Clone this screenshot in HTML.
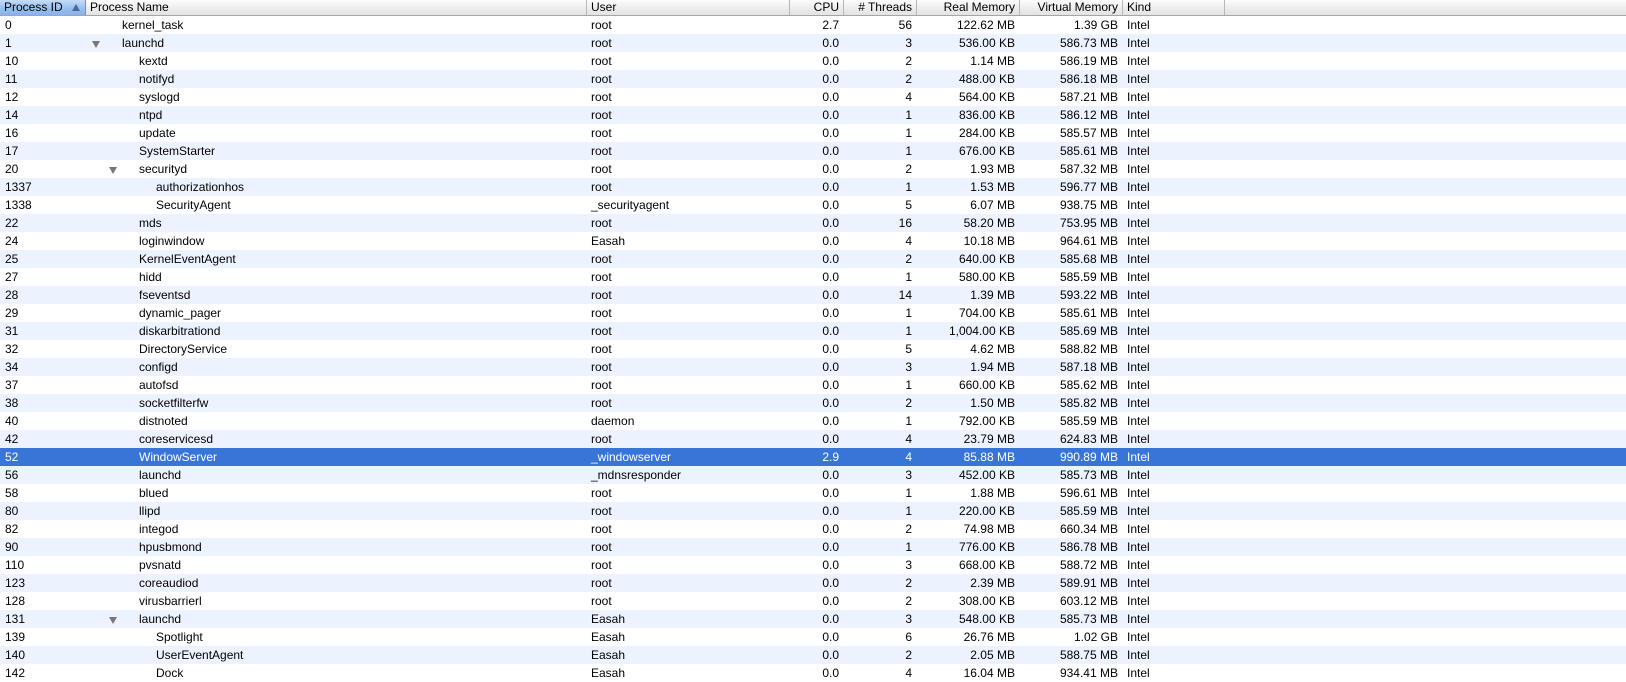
<!DOCTYPE html>
<html><head><meta charset="utf-8"><style>
body{margin:0;width:1626px;height:682px;overflow:hidden;background:#fff;font-family:"Liberation Sans",sans-serif;font-size:12px;color:#000;position:relative}
.hd{position:absolute;left:0;top:0;width:1626px;height:15px;background:linear-gradient(#fdfdfd,#eeeeee 50%,#e3e3e3);border-bottom:1px solid #a5a5a5}
.hd div{position:absolute;top:0;height:15px;line-height:15px;border-right:1px solid #b8b8b8;box-sizing:border-box;padding:0 4px;white-space:nowrap}
.hd .sel{background:linear-gradient(#c5dcf7,#9cc2ee 50%,#86b3e9);border-right:1px solid #6f95c4}
.r{position:absolute;left:0;width:1626px;height:18px;line-height:18px}
.r span{position:absolute;top:0;white-space:nowrap}
.a{left:5px}.u{left:591px}.k{left:1127px}
.c{right:787px}.t{right:714px}.m{right:611px}.v{right:508px}
.tri{position:absolute;top:7px;width:0;height:0;border-left:4px solid transparent;border-right:4px solid transparent;border-top:7px solid #777}
.r:nth-child(odd){background:#fff}.r:nth-child(even){background:#edf3fe}
.r.s{background:#3875d7 !important;color:#fff}
</style></head><body>
<div class="hd">
<div class="sel" style="left:0;width:86px">Process ID<span style="position:absolute;left:72px;top:4px;width:0;height:0;border-left:4px solid transparent;border-right:4px solid transparent;border-bottom:7px solid #4a6a95"></span></div>
<div style="left:86px;width:501px">Process Name</div>
<div style="left:587px;width:203px">User</div>
<div style="left:790px;width:54px;text-align:right">CPU</div>
<div style="left:844px;width:73px;text-align:right"># Threads</div>
<div style="left:917px;width:103px;text-align:right">Real Memory</div>
<div style="left:1020px;width:103px;text-align:right">Virtual Memory</div>
<div style="left:1123px;width:102px">Kind</div>
</div>
<div id="rows"></div>
<script>
var d=[
[0,"kernel_task",0,0,"root","2.7",56,"122.62 MB","1.39 GB"],
[1,"launchd",0,1,"root","0.0",3,"536.00 KB","586.73 MB"],
[10,"kextd",1,0,"root","0.0",2,"1.14 MB","586.19 MB"],
[11,"notifyd",1,0,"root","0.0",2,"488.00 KB","586.18 MB"],
[12,"syslogd",1,0,"root","0.0",4,"564.00 KB","587.21 MB"],
[14,"ntpd",1,0,"root","0.0",1,"836.00 KB","586.12 MB"],
[16,"update",1,0,"root","0.0",1,"284.00 KB","585.57 MB"],
[17,"SystemStarter",1,0,"root","0.0",1,"676.00 KB","585.61 MB"],
[20,"securityd",1,1,"root","0.0",2,"1.93 MB","587.32 MB"],
[1337,"authorizationhos",2,0,"root","0.0",1,"1.53 MB","596.77 MB"],
[1338,"SecurityAgent",2,0,"_securityagent","0.0",5,"6.07 MB","938.75 MB"],
[22,"mds",1,0,"root","0.0",16,"58.20 MB","753.95 MB"],
[24,"loginwindow",1,0,"Easah","0.0",4,"10.18 MB","964.61 MB"],
[25,"KernelEventAgent",1,0,"root","0.0",2,"640.00 KB","585.68 MB"],
[27,"hidd",1,0,"root","0.0",1,"580.00 KB","585.59 MB"],
[28,"fseventsd",1,0,"root","0.0",14,"1.39 MB","593.22 MB"],
[29,"dynamic_pager",1,0,"root","0.0",1,"704.00 KB","585.61 MB"],
[31,"diskarbitrationd",1,0,"root","0.0",1,"1,004.00 KB","585.69 MB"],
[32,"DirectoryService",1,0,"root","0.0",5,"4.62 MB","588.82 MB"],
[34,"configd",1,0,"root","0.0",3,"1.94 MB","587.18 MB"],
[37,"autofsd",1,0,"root","0.0",1,"660.00 KB","585.62 MB"],
[38,"socketfilterfw",1,0,"root","0.0",2,"1.50 MB","585.82 MB"],
[40,"distnoted",1,0,"daemon","0.0",1,"792.00 KB","585.59 MB"],
[42,"coreservicesd",1,0,"root","0.0",4,"23.79 MB","624.83 MB"],
[52,"WindowServer",1,0,"_windowserver","2.9",4,"85.88 MB","990.89 MB"],
[56,"launchd",1,0,"_mdnsresponder","0.0",3,"452.00 KB","585.73 MB"],
[58,"blued",1,0,"root","0.0",1,"1.88 MB","596.61 MB"],
[80,"llipd",1,0,"root","0.0",1,"220.00 KB","585.59 MB"],
[82,"integod",1,0,"root","0.0",2,"74.98 MB","660.34 MB"],
[90,"hpusbmond",1,0,"root","0.0",1,"776.00 KB","586.78 MB"],
[110,"pvsnatd",1,0,"root","0.0",3,"668.00 KB","588.72 MB"],
[123,"coreaudiod",1,0,"root","0.0",2,"2.39 MB","589.91 MB"],
[128,"virusbarrierl",1,0,"root","0.0",2,"308.00 KB","603.12 MB"],
[131,"launchd",1,1,"Easah","0.0",3,"548.00 KB","585.73 MB"],
[139,"Spotlight",2,0,"Easah","0.0",6,"26.76 MB","1.02 GB"],
[140,"UserEventAgent",2,0,"Easah","0.0",2,"2.05 MB","588.75 MB"],
[142,"Dock",2,0,"Easah","0.0",4,"16.04 MB","934.41 MB"]];
var h="";
d.forEach(function(r,i){
var x=122+17*r[2];
h+='<div class="r'+(r[0]==52?' s':'')+'" style="top:'+(16+i*18)+'px"><span class="a">'+r[0]+'</span>'+
(r[3]?'<i class="tri" style="left:'+(x-30)+'px"></i>':'')+
'<span style="left:'+x+'px">'+r[1]+'</span><span class="u">'+r[4]+'</span><span class="c">'+r[5]+'</span><span class="t">'+r[6]+'</span><span class="m">'+r[7]+'</span><span class="v">'+r[8]+'</span><span class="k">Intel</span></div>';
});
document.getElementById("rows").innerHTML=h;
</script>
</body></html>
